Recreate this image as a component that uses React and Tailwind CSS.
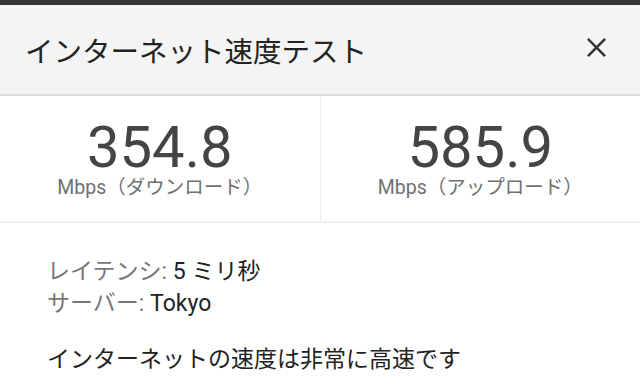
const FONT = { fontFamily: 'Roboto, "Noto Sans CJK JP", sans-serif' };

const CloseIcon = () => (
  <svg width="23" height="23" viewBox="0 0 24 24" fill="none" stroke="#333" strokeWidth="2.6" strokeLinecap="square">
    <line x1="4" y1="4" x2="20" y2="20" />
    <line x1="20" y1="4" x2="4" y2="20" />
  </svg>
);

const Stat = ({ value, label, border }) => (
  <div className={`flex-1 flex flex-col items-center pt-[22px] ${border ? 'border-r border-[#ececec]' : ''}`}>
    <div className="text-[58px] leading-[58px] text-[#444]">{value}</div>
    <div className="text-[19.5px] leading-[24px] text-[#707070]">Mbps（{label}）</div>
  </div>
);

export default function App() {
  return (
    <div className="w-[640px] h-[388px] bg-white overflow-hidden" style={FONT}>
      <div className="h-[5px] bg-[#353535]" />

      {/* Header */}
      <div className="h-[91px] bg-[#f4f4f4] border-b-2 border-[#dcdcdc] flex items-center pl-[25px] pr-[32px]">
        <h1 className="text-[28.5px] text-[#222] leading-none pt-[8px]">インターネット速度テスト</h1>
        <button className="ml-auto pb-[4px]"><CloseIcon /></button>
      </div>

      {/* Speeds */}
      <div className="h-[127px] flex border-b-2 border-[#f0f0f0]">
        <Stat value="354.8" label="ダウンロード" border />
        <Stat value="585.9" label="アップロード" />
      </div>

      {/* Details */}
      <div className="pl-[47px] pt-[33px] text-[23px] leading-[32px]">
        <p><span className="text-[#777]">レイテンシ: </span><span className="text-[#222]">5 ミリ秒</span></p>
        <p><span className="text-[#777]">サーバー: </span><span className="text-[#222]">Tokyo</span></p>
        <p className="mt-[24px] text-[#222]">インターネットの速度は非常に高速です</p>
      </div>
    </div>
  );
}
